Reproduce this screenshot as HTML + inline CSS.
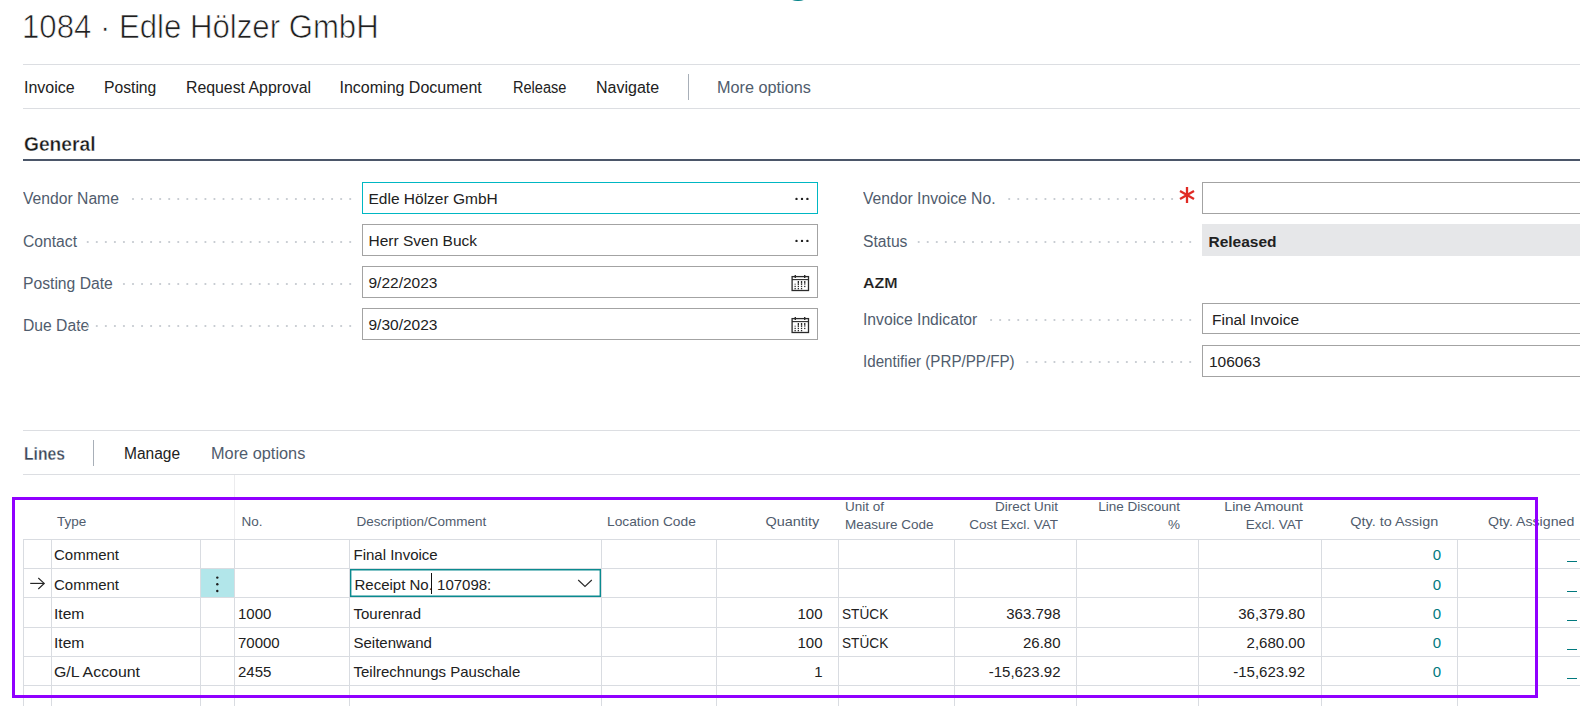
<!DOCTYPE html>
<html><head><meta charset="utf-8"><title>Purchase Invoice</title>
<style>
html,body{margin:0;padding:0;background:#fff;}
#root{position:relative;width:1580px;height:706px;overflow:hidden;background:#fff;font-family:"Liberation Sans",sans-serif;}
.t{position:absolute;white-space:pre;font-family:"Liberation Sans",sans-serif;}
.dot{position:absolute;width:2.2px;height:2.2px;border-radius:50%;background:#bfc4ca;}
</style></head><body><div id="root">
<div style="position:absolute;left:789.6px;top:-6px;width:16px;height:7.4px;border-radius:50%;background:#07848a"></div>
<div class="t" style="left:22px;top:10px;font-size:33px;line-height:33px;color:#1f1f1f;font-weight:400;-webkit-text-stroke:0.7px #fff;paint-order:normal;transform:scaleX(0.944);transform-origin:0 0;">1084 · Edle Hölzer GmbH</div>
<div style="position:absolute;left:23px;top:64px;width:1557px;height:1px;background:#dcdee2"></div>
<div style="position:absolute;left:23px;top:108px;width:1557px;height:1px;background:#dcdee2"></div>
<div class="t" style="left:24px;top:80px;font-size:16px;line-height:16px;color:#212121;font-weight:400;transform:scaleX(1.0);transform-origin:0 0;">Invoice</div>
<div class="t" style="left:104px;top:80px;font-size:16px;line-height:16px;color:#212121;font-weight:400;transform:scaleX(0.98);transform-origin:0 0;">Posting</div>
<div class="t" style="left:186px;top:80px;font-size:16px;line-height:16px;color:#212121;font-weight:400;transform:scaleX(0.99);transform-origin:0 0;">Request Approval</div>
<div class="t" style="left:339.5px;top:80px;font-size:16px;line-height:16px;color:#212121;font-weight:400;transform:scaleX(1.0);transform-origin:0 0;">Incoming Document</div>
<div class="t" style="left:513px;top:80px;font-size:16px;line-height:16px;color:#212121;font-weight:400;transform:scaleX(0.91);transform-origin:0 0;">Release</div>
<div class="t" style="left:596px;top:80px;font-size:16px;line-height:16px;color:#212121;font-weight:400;transform:scaleX(1.0);transform-origin:0 0;">Navigate</div>
<div style="position:absolute;left:688px;top:74px;width:1px;height:26px;background:#a8afb8"></div>
<div class="t" style="left:717px;top:80px;font-size:16px;line-height:16px;color:#505c6d;font-weight:400;transform:scaleX(1.015);transform-origin:0 0;">More options</div>
<div class="t" style="left:23.5px;top:135px;font-size:19.5px;line-height:19.5px;color:#1a1a1a;font-weight:700;-webkit-text-stroke:0.35px #fff;transform:scaleX(0.985);transform-origin:0 0;">General</div>
<div style="position:absolute;left:23px;top:159px;width:1557px;height:2px;background:#4b5669"></div>
<div class="t" style="left:23px;top:191px;font-size:16px;line-height:16px;color:#505c6d;font-weight:400;transform:scaleX(0.98);transform-origin:0 0;">Vendor Name</div>
<svg style="position:absolute;left:126.00px;top:195.40px" width="228" height="8"><g fill="#c4c9cf"><circle cx="224.20" cy="4" r="1.1"/><circle cx="215.15" cy="4" r="1.1"/><circle cx="206.10" cy="4" r="1.1"/><circle cx="197.05" cy="4" r="1.1"/><circle cx="188.00" cy="4" r="1.1"/><circle cx="178.95" cy="4" r="1.1"/><circle cx="169.90" cy="4" r="1.1"/><circle cx="160.85" cy="4" r="1.1"/><circle cx="151.80" cy="4" r="1.1"/><circle cx="142.75" cy="4" r="1.1"/><circle cx="133.70" cy="4" r="1.1"/><circle cx="124.65" cy="4" r="1.1"/><circle cx="115.60" cy="4" r="1.1"/><circle cx="106.55" cy="4" r="1.1"/><circle cx="97.50" cy="4" r="1.1"/><circle cx="88.45" cy="4" r="1.1"/><circle cx="79.40" cy="4" r="1.1"/><circle cx="70.35" cy="4" r="1.1"/><circle cx="61.30" cy="4" r="1.1"/><circle cx="52.25" cy="4" r="1.1"/><circle cx="43.20" cy="4" r="1.1"/><circle cx="34.15" cy="4" r="1.1"/><circle cx="25.10" cy="4" r="1.1"/><circle cx="16.05" cy="4" r="1.1"/><circle cx="7.00" cy="4" r="1.1"/></g></svg>
<div class="t" style="left:23px;top:233.5px;font-size:16px;line-height:16px;color:#505c6d;font-weight:400;transform:scaleX(0.98);transform-origin:0 0;">Contact</div>
<svg style="position:absolute;left:80.00px;top:237.90px" width="274" height="8"><g fill="#c4c9cf"><circle cx="270.20" cy="4" r="1.1"/><circle cx="261.15" cy="4" r="1.1"/><circle cx="252.10" cy="4" r="1.1"/><circle cx="243.05" cy="4" r="1.1"/><circle cx="234.00" cy="4" r="1.1"/><circle cx="224.95" cy="4" r="1.1"/><circle cx="215.90" cy="4" r="1.1"/><circle cx="206.85" cy="4" r="1.1"/><circle cx="197.80" cy="4" r="1.1"/><circle cx="188.75" cy="4" r="1.1"/><circle cx="179.70" cy="4" r="1.1"/><circle cx="170.65" cy="4" r="1.1"/><circle cx="161.60" cy="4" r="1.1"/><circle cx="152.55" cy="4" r="1.1"/><circle cx="143.50" cy="4" r="1.1"/><circle cx="134.45" cy="4" r="1.1"/><circle cx="125.40" cy="4" r="1.1"/><circle cx="116.35" cy="4" r="1.1"/><circle cx="107.30" cy="4" r="1.1"/><circle cx="98.25" cy="4" r="1.1"/><circle cx="89.20" cy="4" r="1.1"/><circle cx="80.15" cy="4" r="1.1"/><circle cx="71.10" cy="4" r="1.1"/><circle cx="62.05" cy="4" r="1.1"/><circle cx="53.00" cy="4" r="1.1"/><circle cx="43.95" cy="4" r="1.1"/><circle cx="34.90" cy="4" r="1.1"/><circle cx="25.85" cy="4" r="1.1"/><circle cx="16.80" cy="4" r="1.1"/><circle cx="7.75" cy="4" r="1.1"/></g></svg>
<div class="t" style="left:23px;top:275.5px;font-size:16px;line-height:16px;color:#505c6d;font-weight:400;transform:scaleX(0.98);transform-origin:0 0;">Posting Date</div>
<svg style="position:absolute;left:114.00px;top:279.90px" width="240" height="8"><g fill="#c4c9cf"><circle cx="236.20" cy="4" r="1.1"/><circle cx="227.15" cy="4" r="1.1"/><circle cx="218.10" cy="4" r="1.1"/><circle cx="209.05" cy="4" r="1.1"/><circle cx="200.00" cy="4" r="1.1"/><circle cx="190.95" cy="4" r="1.1"/><circle cx="181.90" cy="4" r="1.1"/><circle cx="172.85" cy="4" r="1.1"/><circle cx="163.80" cy="4" r="1.1"/><circle cx="154.75" cy="4" r="1.1"/><circle cx="145.70" cy="4" r="1.1"/><circle cx="136.65" cy="4" r="1.1"/><circle cx="127.60" cy="4" r="1.1"/><circle cx="118.55" cy="4" r="1.1"/><circle cx="109.50" cy="4" r="1.1"/><circle cx="100.45" cy="4" r="1.1"/><circle cx="91.40" cy="4" r="1.1"/><circle cx="82.35" cy="4" r="1.1"/><circle cx="73.30" cy="4" r="1.1"/><circle cx="64.25" cy="4" r="1.1"/><circle cx="55.20" cy="4" r="1.1"/><circle cx="46.15" cy="4" r="1.1"/><circle cx="37.10" cy="4" r="1.1"/><circle cx="28.05" cy="4" r="1.1"/><circle cx="19.00" cy="4" r="1.1"/><circle cx="9.95" cy="4" r="1.1"/></g></svg>
<div class="t" style="left:23px;top:317.5px;font-size:16px;line-height:16px;color:#505c6d;font-weight:400;transform:scaleX(0.98);transform-origin:0 0;">Due Date</div>
<svg style="position:absolute;left:73.00px;top:321.90px" width="281" height="8"><g fill="#c4c9cf"><circle cx="277.20" cy="4" r="1.1"/><circle cx="268.15" cy="4" r="1.1"/><circle cx="259.10" cy="4" r="1.1"/><circle cx="250.05" cy="4" r="1.1"/><circle cx="241.00" cy="4" r="1.1"/><circle cx="231.95" cy="4" r="1.1"/><circle cx="222.90" cy="4" r="1.1"/><circle cx="213.85" cy="4" r="1.1"/><circle cx="204.80" cy="4" r="1.1"/><circle cx="195.75" cy="4" r="1.1"/><circle cx="186.70" cy="4" r="1.1"/><circle cx="177.65" cy="4" r="1.1"/><circle cx="168.60" cy="4" r="1.1"/><circle cx="159.55" cy="4" r="1.1"/><circle cx="150.50" cy="4" r="1.1"/><circle cx="141.45" cy="4" r="1.1"/><circle cx="132.40" cy="4" r="1.1"/><circle cx="123.35" cy="4" r="1.1"/><circle cx="114.30" cy="4" r="1.1"/><circle cx="105.25" cy="4" r="1.1"/><circle cx="96.20" cy="4" r="1.1"/><circle cx="87.15" cy="4" r="1.1"/><circle cx="78.10" cy="4" r="1.1"/><circle cx="69.05" cy="4" r="1.1"/><circle cx="60.00" cy="4" r="1.1"/><circle cx="50.95" cy="4" r="1.1"/><circle cx="41.90" cy="4" r="1.1"/><circle cx="32.85" cy="4" r="1.1"/><circle cx="23.80" cy="4" r="1.1"/><circle cx="14.75" cy="4" r="1.1"/><circle cx="5.70" cy="4" r="1.1"/></g></svg>
<div style="position:absolute;left:362px;top:182px;width:456px;height:32px;box-sizing:border-box;border:1px solid #00b7c3;background:#fff"></div>
<div class="t" style="left:368.5px;top:191px;font-size:15.5px;line-height:15.5px;color:#212121;font-weight:400;">Edle Hölzer GmbH</div>
<svg style="position:absolute;left:790px;top:192px" width="24" height="14"><g fill="#1e1e1e"><circle cx="6.5" cy="6.9" r="1.2"/><circle cx="12" cy="6.9" r="1.2"/><circle cx="17.4" cy="6.9" r="1.2"/></g></svg>
<div style="position:absolute;left:362px;top:224px;width:456px;height:32px;box-sizing:border-box;border:1px solid #a3a3a3;background:#fff"></div>
<div class="t" style="left:368.5px;top:233px;font-size:15.5px;line-height:15.5px;color:#212121;font-weight:400;">Herr Sven Buck</div>
<svg style="position:absolute;left:790px;top:234px" width="24" height="14"><g fill="#1e1e1e"><circle cx="6.5" cy="6.9" r="1.2"/><circle cx="12" cy="6.9" r="1.2"/><circle cx="17.4" cy="6.9" r="1.2"/></g></svg>
<div style="position:absolute;left:362px;top:266px;width:456px;height:32px;box-sizing:border-box;border:1px solid #a3a3a3;background:#fff"></div>
<div class="t" style="left:368.5px;top:275px;font-size:15.5px;line-height:15.5px;color:#212121;font-weight:400;">9/22/2023</div>
<svg style="position:absolute;left:790px;top:274px" width="21" height="18" viewBox="0 0 21 18">
<rect x="2.1" y="2.6" width="16.4" height="13.9" fill="none" stroke="#2b2b2b" stroke-width="1.3"/>
<line x1="2" y1="5.6" x2="18.6" y2="5.6" stroke="#2b2b2b" stroke-width="1.1"/>
<line x1="5.3" y1="1" x2="5.3" y2="4" stroke="#2b2b2b" stroke-width="1.4"/>
<line x1="14.7" y1="1" x2="14.7" y2="4" stroke="#2b2b2b" stroke-width="1.4"/>
<g fill="#2b2b2b">
<rect x="7.7" y="7" width="1.3" height="2.6"/><rect x="10.9" y="7" width="1.3" height="2.6"/><rect x="14.1" y="7" width="1.3" height="2.6"/>
<rect x="4.5" y="9.6" width="1.3" height="1.3" opacity=".6"/><rect x="7.7" y="9.6" width="1.3" height="1.3"/><rect x="10.9" y="9.6" width="1.3" height="1.3"/><rect x="14.1" y="9.6" width="1.3" height="1.3" opacity=".7"/>
<rect x="4.5" y="11.8" width="1.3" height="1.3"/><rect x="7.7" y="11.8" width="1.3" height="1.3"/><rect x="10.9" y="11.8" width="1.3" height="1.3"/><rect x="14.1" y="11.8" width="1.3" height="1.3"/>
<rect x="4.5" y="14" width="1.3" height="1.3"/><rect x="7.7" y="14" width="1.3" height="1.3"/><rect x="10.9" y="14" width="1.3" height="1.3"/>
</g></svg>
<div style="position:absolute;left:362px;top:308px;width:456px;height:32px;box-sizing:border-box;border:1px solid #a3a3a3;background:#fff"></div>
<div class="t" style="left:368.5px;top:317px;font-size:15.5px;line-height:15.5px;color:#212121;font-weight:400;">9/30/2023</div>
<svg style="position:absolute;left:790px;top:316px" width="21" height="18" viewBox="0 0 21 18">
<rect x="2.1" y="2.6" width="16.4" height="13.9" fill="none" stroke="#2b2b2b" stroke-width="1.3"/>
<line x1="2" y1="5.6" x2="18.6" y2="5.6" stroke="#2b2b2b" stroke-width="1.1"/>
<line x1="5.3" y1="1" x2="5.3" y2="4" stroke="#2b2b2b" stroke-width="1.4"/>
<line x1="14.7" y1="1" x2="14.7" y2="4" stroke="#2b2b2b" stroke-width="1.4"/>
<g fill="#2b2b2b">
<rect x="7.7" y="7" width="1.3" height="2.6"/><rect x="10.9" y="7" width="1.3" height="2.6"/><rect x="14.1" y="7" width="1.3" height="2.6"/>
<rect x="4.5" y="9.6" width="1.3" height="1.3" opacity=".6"/><rect x="7.7" y="9.6" width="1.3" height="1.3"/><rect x="10.9" y="9.6" width="1.3" height="1.3"/><rect x="14.1" y="9.6" width="1.3" height="1.3" opacity=".7"/>
<rect x="4.5" y="11.8" width="1.3" height="1.3"/><rect x="7.7" y="11.8" width="1.3" height="1.3"/><rect x="10.9" y="11.8" width="1.3" height="1.3"/><rect x="14.1" y="11.8" width="1.3" height="1.3"/>
<rect x="4.5" y="14" width="1.3" height="1.3"/><rect x="7.7" y="14" width="1.3" height="1.3"/><rect x="10.9" y="14" width="1.3" height="1.3"/>
</g></svg>
<div class="t" style="left:863px;top:191px;font-size:16px;line-height:16px;color:#505c6d;font-weight:400;transform:scaleX(0.98);transform-origin:0 0;">Vendor Invoice No.</div>
<svg style="position:absolute;left:1000.00px;top:195.40px" width="176" height="8"><g fill="#c4c9cf"><circle cx="172.10" cy="4" r="1.1"/><circle cx="163.05" cy="4" r="1.1"/><circle cx="154.00" cy="4" r="1.1"/><circle cx="144.95" cy="4" r="1.1"/><circle cx="135.90" cy="4" r="1.1"/><circle cx="126.85" cy="4" r="1.1"/><circle cx="117.80" cy="4" r="1.1"/><circle cx="108.75" cy="4" r="1.1"/><circle cx="99.70" cy="4" r="1.1"/><circle cx="90.65" cy="4" r="1.1"/><circle cx="81.60" cy="4" r="1.1"/><circle cx="72.55" cy="4" r="1.1"/><circle cx="63.50" cy="4" r="1.1"/><circle cx="54.45" cy="4" r="1.1"/><circle cx="45.40" cy="4" r="1.1"/><circle cx="36.35" cy="4" r="1.1"/><circle cx="27.30" cy="4" r="1.1"/><circle cx="18.25" cy="4" r="1.1"/><circle cx="9.20" cy="4" r="1.1"/></g></svg>
<svg style="position:absolute;left:1177px;top:185px" width="20" height="20" viewBox="0 0 20 20">
<g stroke="#e02a24" stroke-width="2.3" stroke-linecap="butt">
<line x1="10" y1="2" x2="10" y2="18"/><line x1="3" y1="6" x2="17" y2="14"/><line x1="3" y1="14" x2="17" y2="6"/></g></svg>
<div style="position:absolute;left:1202px;top:182px;width:400px;height:32px;box-sizing:border-box;border:1px solid #a3a3a3;background:#fff"></div>
<div class="t" style="left:863px;top:234px;font-size:16px;line-height:16px;color:#505c6d;font-weight:400;transform:scaleX(0.98);transform-origin:0 0;">Status</div>
<svg style="position:absolute;left:910.00px;top:237.80px" width="284" height="8"><g fill="#c4c9cf"><circle cx="280.20" cy="4" r="1.1"/><circle cx="271.15" cy="4" r="1.1"/><circle cx="262.10" cy="4" r="1.1"/><circle cx="253.05" cy="4" r="1.1"/><circle cx="244.00" cy="4" r="1.1"/><circle cx="234.95" cy="4" r="1.1"/><circle cx="225.90" cy="4" r="1.1"/><circle cx="216.85" cy="4" r="1.1"/><circle cx="207.80" cy="4" r="1.1"/><circle cx="198.75" cy="4" r="1.1"/><circle cx="189.70" cy="4" r="1.1"/><circle cx="180.65" cy="4" r="1.1"/><circle cx="171.60" cy="4" r="1.1"/><circle cx="162.55" cy="4" r="1.1"/><circle cx="153.50" cy="4" r="1.1"/><circle cx="144.45" cy="4" r="1.1"/><circle cx="135.40" cy="4" r="1.1"/><circle cx="126.35" cy="4" r="1.1"/><circle cx="117.30" cy="4" r="1.1"/><circle cx="108.25" cy="4" r="1.1"/><circle cx="99.20" cy="4" r="1.1"/><circle cx="90.15" cy="4" r="1.1"/><circle cx="81.10" cy="4" r="1.1"/><circle cx="72.05" cy="4" r="1.1"/><circle cx="63.00" cy="4" r="1.1"/><circle cx="53.95" cy="4" r="1.1"/><circle cx="44.90" cy="4" r="1.1"/><circle cx="35.85" cy="4" r="1.1"/><circle cx="26.80" cy="4" r="1.1"/><circle cx="17.75" cy="4" r="1.1"/><circle cx="8.70" cy="4" r="1.1"/></g></svg>
<div style="position:absolute;left:1202px;top:224px;width:400px;height:32px;background:#e6e7e9"></div>
<div class="t" style="left:1208.5px;top:234px;font-size:15.5px;line-height:15.5px;color:#212121;font-weight:700;">Released</div>
<div class="t" style="left:863px;top:275px;font-size:15.5px;line-height:15.5px;color:#1c1c1c;font-weight:700;-webkit-text-stroke:0.15px #fff;transform:scaleX(1.03);transform-origin:0 0;">AZM</div>
<div class="t" style="left:863px;top:312px;font-size:16px;line-height:16px;color:#505c6d;font-weight:400;transform:scaleX(0.98);transform-origin:0 0;">Invoice Indicator</div>
<svg style="position:absolute;left:984.00px;top:316.30px" width="210" height="8"><g fill="#c4c9cf"><circle cx="206.20" cy="4" r="1.1"/><circle cx="197.15" cy="4" r="1.1"/><circle cx="188.10" cy="4" r="1.1"/><circle cx="179.05" cy="4" r="1.1"/><circle cx="170.00" cy="4" r="1.1"/><circle cx="160.95" cy="4" r="1.1"/><circle cx="151.90" cy="4" r="1.1"/><circle cx="142.85" cy="4" r="1.1"/><circle cx="133.80" cy="4" r="1.1"/><circle cx="124.75" cy="4" r="1.1"/><circle cx="115.70" cy="4" r="1.1"/><circle cx="106.65" cy="4" r="1.1"/><circle cx="97.60" cy="4" r="1.1"/><circle cx="88.55" cy="4" r="1.1"/><circle cx="79.50" cy="4" r="1.1"/><circle cx="70.45" cy="4" r="1.1"/><circle cx="61.40" cy="4" r="1.1"/><circle cx="52.35" cy="4" r="1.1"/><circle cx="43.30" cy="4" r="1.1"/><circle cx="34.25" cy="4" r="1.1"/><circle cx="25.20" cy="4" r="1.1"/><circle cx="16.15" cy="4" r="1.1"/><circle cx="7.10" cy="4" r="1.1"/></g></svg>
<div style="position:absolute;left:1202px;top:303px;width:400px;height:31px;box-sizing:border-box;border:1px solid #a3a3a3;background:#fff"></div>
<div class="t" style="left:1212px;top:311.5px;font-size:15.5px;line-height:15.5px;color:#212121;font-weight:400;">Final Invoice</div>
<div class="t" style="left:863px;top:354px;font-size:16px;line-height:16px;color:#505c6d;font-weight:400;transform:scaleX(0.947);transform-origin:0 0;">Identifier (PRP/PP/FP)</div>
<svg style="position:absolute;left:1018.00px;top:358.40px" width="176" height="8"><g fill="#c4c9cf"><circle cx="172.20" cy="4" r="1.1"/><circle cx="163.15" cy="4" r="1.1"/><circle cx="154.10" cy="4" r="1.1"/><circle cx="145.05" cy="4" r="1.1"/><circle cx="136.00" cy="4" r="1.1"/><circle cx="126.95" cy="4" r="1.1"/><circle cx="117.90" cy="4" r="1.1"/><circle cx="108.85" cy="4" r="1.1"/><circle cx="99.80" cy="4" r="1.1"/><circle cx="90.75" cy="4" r="1.1"/><circle cx="81.70" cy="4" r="1.1"/><circle cx="72.65" cy="4" r="1.1"/><circle cx="63.60" cy="4" r="1.1"/><circle cx="54.55" cy="4" r="1.1"/><circle cx="45.50" cy="4" r="1.1"/><circle cx="36.45" cy="4" r="1.1"/><circle cx="27.40" cy="4" r="1.1"/><circle cx="18.35" cy="4" r="1.1"/><circle cx="9.30" cy="4" r="1.1"/></g></svg>
<div style="position:absolute;left:1202px;top:345px;width:400px;height:32px;box-sizing:border-box;border:1px solid #a3a3a3;background:#fff"></div>
<div class="t" style="left:1209px;top:354px;font-size:15.5px;line-height:15.5px;color:#212121;font-weight:400;">106063</div>
<div style="position:absolute;left:23px;top:430px;width:1557px;height:1px;background:#dcdee2"></div>
<div style="position:absolute;left:23px;top:474px;width:1557px;height:1px;background:#dcdee2"></div>
<div class="t" style="left:24px;top:445px;font-size:18px;line-height:18px;color:#3a4659;font-weight:700;-webkit-text-stroke:0.3px #fff;transform:scaleX(0.87);transform-origin:0 0;">Lines</div>
<div style="position:absolute;left:93px;top:440px;width:1px;height:26px;background:#a8afb8"></div>
<div class="t" style="left:123.5px;top:446px;font-size:16px;line-height:16px;color:#212121;font-weight:400;transform:scaleX(0.97);transform-origin:0 0;">Manage</div>
<div class="t" style="left:211px;top:446px;font-size:16px;line-height:16px;color:#505c6d;font-weight:400;transform:scaleX(1.02);transform-origin:0 0;">More options</div>
<div style="position:absolute;left:234px;top:475px;width:1px;height:64px;background:#ececee"></div>
<div style="position:absolute;left:23px;top:539px;width:1557px;height:1px;background:#d9dce1"></div>
<div style="position:absolute;left:23px;top:568px;width:1557px;height:1px;background:#d9dce1"></div>
<div style="position:absolute;left:23px;top:597px;width:1557px;height:1px;background:#d9dce1"></div>
<div style="position:absolute;left:23px;top:627px;width:1557px;height:1px;background:#d9dce1"></div>
<div style="position:absolute;left:23px;top:656px;width:1557px;height:1px;background:#d9dce1"></div>
<div style="position:absolute;left:23px;top:685px;width:1557px;height:1px;background:#d9dce1"></div>
<div style="position:absolute;left:23px;top:539px;width:1px;height:167px;background:#d9dce1"></div>
<div style="position:absolute;left:51px;top:539px;width:1px;height:167px;background:#d9dce1"></div>
<div style="position:absolute;left:200px;top:539px;width:1px;height:167px;background:#d9dce1"></div>
<div style="position:absolute;left:234px;top:539px;width:1px;height:167px;background:#d9dce1"></div>
<div style="position:absolute;left:349px;top:539px;width:1px;height:167px;background:#d9dce1"></div>
<div style="position:absolute;left:601px;top:539px;width:1px;height:167px;background:#d9dce1"></div>
<div style="position:absolute;left:716px;top:539px;width:1px;height:167px;background:#d9dce1"></div>
<div style="position:absolute;left:838px;top:539px;width:1px;height:167px;background:#d9dce1"></div>
<div style="position:absolute;left:954px;top:539px;width:1px;height:167px;background:#d9dce1"></div>
<div style="position:absolute;left:1076px;top:539px;width:1px;height:167px;background:#d9dce1"></div>
<div style="position:absolute;left:1198px;top:539px;width:1px;height:167px;background:#d9dce1"></div>
<div style="position:absolute;left:1321px;top:539px;width:1px;height:167px;background:#d9dce1"></div>
<div style="position:absolute;left:1457px;top:539px;width:1px;height:167px;background:#d9dce1"></div>
<div style="position:absolute;left:201px;top:569px;width:33px;height:28px;background:#b2e6ea"></div>
<svg style="position:absolute;left:210px;top:570px" width="14" height="26"><g fill="#1e1e1e"><circle cx="7.3" cy="7.6" r="1.2"/><circle cx="7.3" cy="14.2" r="1.2"/><circle cx="7.3" cy="21" r="1.2"/></g></svg>
<div class="t" style="left:57px;top:515px;font-size:13.5px;line-height:13.5px;color:#505c6d;font-weight:400;">Type</div>
<div class="t" style="left:241.5px;top:515px;font-size:13.5px;line-height:13.5px;color:#505c6d;font-weight:400;">No.</div>
<div class="t" style="left:356.5px;top:515px;font-size:13.5px;line-height:13.5px;color:#505c6d;font-weight:400;">Description/Comment</div>
<div class="t" style="left:607px;top:515px;font-size:13.5px;line-height:13.5px;color:#505c6d;font-weight:400;transform:scaleX(1.02);transform-origin:0 0;">Location Code</div>
<div class="t" style="right:760.5px;top:515px;font-size:13.5px;line-height:13.5px;color:#505c6d;font-weight:400;text-align:right;transform:scaleX(1.07);transform-origin:100% 0;">Quantity</div>
<div class="t" style="left:845px;top:499.5px;font-size:13.5px;line-height:13.5px;color:#505c6d;font-weight:400;">Unit of</div>
<div class="t" style="left:845px;top:518px;font-size:13.5px;line-height:13.5px;color:#505c6d;font-weight:400;">Measure Code</div>
<div class="t" style="right:522px;top:499.5px;font-size:13.5px;line-height:13.5px;color:#505c6d;font-weight:400;text-align:right;">Direct Unit</div>
<div class="t" style="right:522px;top:518px;font-size:13.5px;line-height:13.5px;color:#505c6d;font-weight:400;text-align:right;">Cost Excl. VAT</div>
<div class="t" style="right:400px;top:499.5px;font-size:13.5px;line-height:13.5px;color:#505c6d;font-weight:400;text-align:right;">Line Discount</div>
<div class="t" style="right:400px;top:518px;font-size:13.5px;line-height:13.5px;color:#505c6d;font-weight:400;text-align:right;">%</div>
<div class="t" style="right:277px;top:499.5px;font-size:13.5px;line-height:13.5px;color:#505c6d;font-weight:400;text-align:right;transform:scaleX(1.05);transform-origin:100% 0;">Line Amount</div>
<div class="t" style="right:277px;top:518px;font-size:13.5px;line-height:13.5px;color:#505c6d;font-weight:400;text-align:right;">Excl. VAT</div>
<div class="t" style="right:142px;top:515px;font-size:13.5px;line-height:13.5px;color:#505c6d;font-weight:400;text-align:right;transform:scaleX(1.07);transform-origin:100% 0;">Qty. to Assign</div>
<div class="t" style="right:6px;top:515px;font-size:13.5px;line-height:13.5px;color:#505c6d;font-weight:400;text-align:right;transform:scaleX(1.05);transform-origin:100% 0;">Qty. Assigned</div>
<div class="t" style="left:54px;top:547px;font-size:15px;line-height:15px;color:#212121;font-weight:400;">Comment</div>
<div class="t" style="left:353.5px;top:547px;font-size:15px;line-height:15px;color:#212121;font-weight:400;">Final Invoice</div>
<div class="t" style="right:139px;top:547px;font-size:15px;line-height:15px;color:#00797e;font-weight:400;text-align:right;">0</div>
<div style="position:absolute;left:1567px;top:561px;width:10px;height:1.2px;background:#00797e"></div>
<div class="t" style="left:54px;top:577px;font-size:15px;line-height:15px;color:#212121;font-weight:400;">Comment</div>
<div class="t" style="right:139px;top:577px;font-size:15px;line-height:15px;color:#00797e;font-weight:400;text-align:right;">0</div>
<div style="position:absolute;left:1567px;top:591px;width:10px;height:1.2px;background:#00797e"></div>
<div class="t" style="left:54px;top:605.8px;font-size:15px;line-height:15px;color:#212121;font-weight:400;transform:scaleX(1.04);transform-origin:0 0;">Item</div>
<div class="t" style="left:238px;top:605.8px;font-size:15px;line-height:15px;color:#212121;font-weight:400;">1000</div>
<div class="t" style="left:353.5px;top:605.8px;font-size:15px;line-height:15px;color:#212121;font-weight:400;">Tourenrad</div>
<div class="t" style="right:757.5px;top:605.8px;font-size:15px;line-height:15px;color:#212121;font-weight:400;text-align:right;">100</div>
<div class="t" style="left:842px;top:605.8px;font-size:15px;line-height:15px;color:#212121;font-weight:400;transform:scaleX(0.91);transform-origin:0 0;">STÜCK</div>
<div class="t" style="right:519.5px;top:605.8px;font-size:15px;line-height:15px;color:#212121;font-weight:400;text-align:right;">363.798</div>
<div class="t" style="right:275px;top:605.8px;font-size:15px;line-height:15px;color:#212121;font-weight:400;text-align:right;">36,379.80</div>
<div class="t" style="right:139px;top:605.8px;font-size:15px;line-height:15px;color:#00797e;font-weight:400;text-align:right;">0</div>
<div style="position:absolute;left:1567px;top:619.8px;width:10px;height:1.2px;background:#00797e"></div>
<div class="t" style="left:54px;top:634.6px;font-size:15px;line-height:15px;color:#212121;font-weight:400;transform:scaleX(1.04);transform-origin:0 0;">Item</div>
<div class="t" style="left:238px;top:634.6px;font-size:15px;line-height:15px;color:#212121;font-weight:400;">70000</div>
<div class="t" style="left:353.5px;top:634.6px;font-size:15px;line-height:15px;color:#212121;font-weight:400;">Seitenwand</div>
<div class="t" style="right:757.5px;top:634.6px;font-size:15px;line-height:15px;color:#212121;font-weight:400;text-align:right;">100</div>
<div class="t" style="left:842px;top:634.6px;font-size:15px;line-height:15px;color:#212121;font-weight:400;transform:scaleX(0.91);transform-origin:0 0;">STÜCK</div>
<div class="t" style="right:519.5px;top:634.6px;font-size:15px;line-height:15px;color:#212121;font-weight:400;text-align:right;">26.80</div>
<div class="t" style="right:275px;top:634.6px;font-size:15px;line-height:15px;color:#212121;font-weight:400;text-align:right;">2,680.00</div>
<div class="t" style="right:139px;top:634.6px;font-size:15px;line-height:15px;color:#00797e;font-weight:400;text-align:right;">0</div>
<div style="position:absolute;left:1567px;top:648.6px;width:10px;height:1.2px;background:#00797e"></div>
<div class="t" style="left:54px;top:663.6px;font-size:15px;line-height:15px;color:#212121;font-weight:400;transform:scaleX(1.06);transform-origin:0 0;">G/L Account</div>
<div class="t" style="left:238px;top:663.6px;font-size:15px;line-height:15px;color:#212121;font-weight:400;">2455</div>
<div class="t" style="left:353.5px;top:663.6px;font-size:15px;line-height:15px;color:#212121;font-weight:400;">Teilrechnungs Pauschale</div>
<div class="t" style="right:757.5px;top:663.6px;font-size:15px;line-height:15px;color:#212121;font-weight:400;text-align:right;">1</div>
<div class="t" style="right:519.5px;top:663.6px;font-size:15px;line-height:15px;color:#212121;font-weight:400;text-align:right;">-15,623.92</div>
<div class="t" style="right:275px;top:663.6px;font-size:15px;line-height:15px;color:#212121;font-weight:400;text-align:right;">-15,623.92</div>
<div class="t" style="right:139px;top:663.6px;font-size:15px;line-height:15px;color:#00797e;font-weight:400;text-align:right;">0</div>
<div style="position:absolute;left:1567px;top:677.6px;width:10px;height:1.2px;background:#00797e"></div>
<svg style="position:absolute;left:28px;top:576px" width="20" height="16" viewBox="0 0 20 16">
<g fill="none" stroke="#262626" stroke-width="1.15"><line x1="2.2" y1="7.4" x2="16.2" y2="7.4"/><polyline points="10.3,2 16.2,7.4 10.3,13"/></g></svg>
<div style="position:absolute;left:350px;top:569px;width:251px;height:28px;box-sizing:border-box;border:1px solid #0a8a8f;background:#fff;box-shadow:inset 0 0 0 0.4px #0a8a8f"></div>
<div class="t" style="left:354.5px;top:577px;font-size:15px;line-height:15px;color:#212121;font-weight:400;">Receipt No. 107098:</div>
<div style="position:absolute;left:431px;top:573px;width:1px;height:21px;background:#111"></div>
<svg style="position:absolute;left:576px;top:577px" width="18" height="12" viewBox="0 0 18 12">
<polyline points="2.2,3 9,9.4 15.8,3" fill="none" stroke="#2a2a2a" stroke-width="1.15"/></svg>
<div style="position:absolute;left:12px;top:497px;width:1526px;height:201px;box-sizing:border-box;border:3px solid #9000ff"></div>
</div></body></html>
